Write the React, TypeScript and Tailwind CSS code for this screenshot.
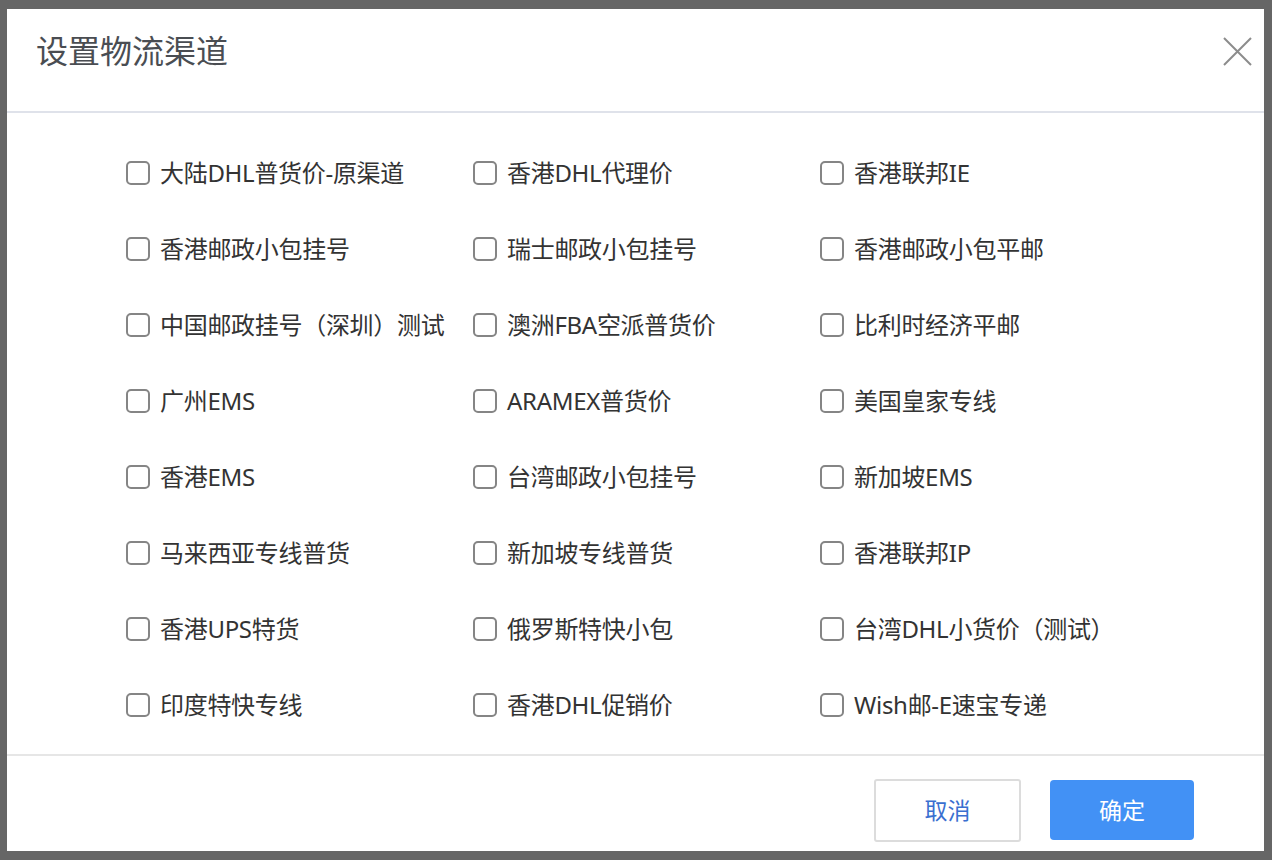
import React, { useState } from "react";

const channels: string[] = [
  "大陆DHL普货价-原渠道",
  "香港DHL代理价",
  "香港联邦IE",
  "香港邮政小包挂号",
  "瑞士邮政小包挂号",
  "香港邮政小包平邮",
  "中国邮政挂号（深圳）测试",
  "澳洲FBA空派普货价",
  "比利时经济平邮",
  "广州EMS",
  "ARAMEX普货价",
  "美国皇家专线",
  "香港EMS",
  "台湾邮政小包挂号",
  "新加坡EMS",
  "马来西亚专线普货",
  "新加坡专线普货",
  "香港联邦IP",
  "香港UPS特货",
  "俄罗斯特快小包",
  "台湾DHL小货价（测试）",
  "印度特快专线",
  "香港DHL促销价",
  "Wish邮-E速宝专递",
];

const App = () => {
  const [checked, setChecked] = useState<Record<string, boolean>>({});

  const toggle = (name: string) => {
    setChecked({ ...checked, [name]: !checked[name] });
  };

  return (
    <div
      className="w-[1272px] h-[860px] bg-[#666666] pt-[9px] pl-[7px] overflow-hidden"
      style={{ fontFamily: '"Noto Sans", "Noto Sans CJK SC", sans-serif' }}
    >
      <div className="w-[1257px] h-[842px] bg-white flex flex-col">
        {/* Header */}
        <div className="h-[104px] flex items-center justify-between pl-[29px] pr-[9px] border-b-2 border-[#dfe2ea] shrink-0">
          <h2 className="text-[32px] leading-none text-[#4a4d52] -mt-[18px]">
            设置物流渠道
          </h2>
          <button className="w-[36px] h-[36px] flex items-center justify-center -mt-[18px]">
            <svg width="29" height="29" viewBox="0 0 29 29" fill="none">
              <path
                d="M1 1L28 28M28 1L1 28"
                stroke="#8c8c8c"
                strokeWidth="2"
              />
            </svg>
          </button>
        </div>

        {/* Body */}
        <div className="flex-1 pt-[22px] pl-[119px]">
          <div className="grid grid-cols-[347px_347px_347px]">
            {channels.map((name) => (
              <label
                key={name}
                className="h-[76px] flex items-center cursor-pointer select-none"
              >
                <span
                  onClick={() => toggle(name)}
                  className={`w-[24px] h-[24px] rounded-[5px] border-2 shrink-0 flex items-center justify-center ${
                    checked[name]
                      ? "bg-[#4291f5] border-[#4291f5]"
                      : "bg-white border-[#858585]"
                  }`}
                >
                  {checked[name] && (
                    <svg width="14" height="14" viewBox="0 0 14 14" fill="none">
                      <path
                        d="M2 7l3.5 3.5L12 3.5"
                        stroke="white"
                        strokeWidth="2"
                      />
                    </svg>
                  )}
                </span>
                <span className="ml-[10px] text-[24px] text-[#333333] whitespace-nowrap tracking-[-0.3px]">
                  {name}
                </span>
              </label>
            ))}
          </div>
        </div>

        {/* Footer */}
        <div className="h-[97px] border-t-2 border-[#e6e6e6] flex items-start justify-end pt-[23px] pr-[70px] gap-[29px] shrink-0">
          <button className="w-[147px] h-[63px] rounded-[3px] border-2 border-[#dcdcdc] bg-white text-[23px] text-[#3a6fd0]">
            取消
          </button>
          <button className="w-[144px] h-[60px] mt-[1px] rounded-[4px] bg-[#4291f5] text-[23px] text-white">
            确定
          </button>
        </div>
      </div>
    </div>
  );
};

export default App;
